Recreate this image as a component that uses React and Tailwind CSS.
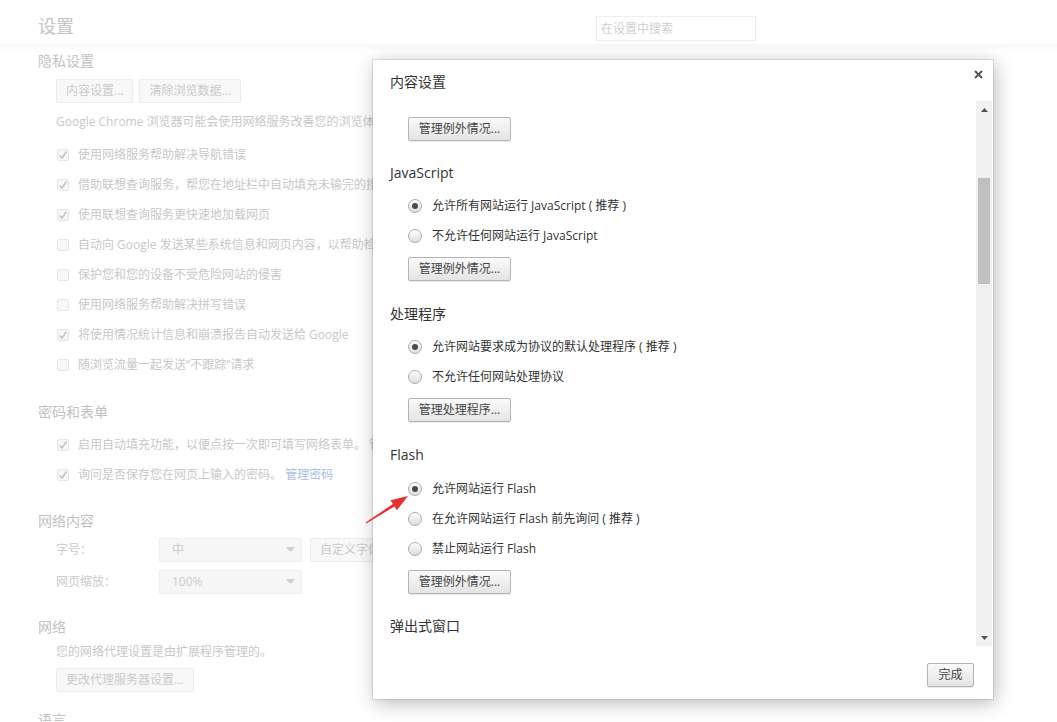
const font = "font-['Open_Sans','Noto_Sans_CJK_SC',sans-serif]";

const FadedCheck = ({ checked, children }) => (
	<div className="flex h-[30px] items-center pl-[57px] whitespace-nowrap">
		<span className="mr-[9px] flex h-[12px] w-[12px] items-center justify-center rounded-[2px] border border-[#e6e6e6] bg-[#f7f7f7]">
			{checked && (
				<svg width="10" height="10" viewBox="0 0 10 10">
					<path d="M1.5 5.5 L4 8 L8.5 1.5" fill="none" stroke="#c4c4c4" strokeWidth="1.6" />
				</svg>
			)}
		</span>
		<span className="text-[12px] text-[#c8c8c8]">{children}</span>
	</div>
);

const FadedButton = ({ children, className = '' }) => (
	<div className={`flex h-[24px] items-center rounded-[2px] border border-[#ececec] bg-[#f8f8f8] px-[9px] text-[12px] text-[#cacaca] whitespace-nowrap ${className}`}>
		{children}
	</div>
);

const FadedSelect = ({ value }) => (
	<div className="flex h-[24px] w-[143px] items-center justify-between border border-[#efefef] bg-[#f6f6f6] pl-[12px] pr-[6px] text-[12px] text-[#cdcdcd]">
		<span>{value}</span>
		<svg width="9" height="6" viewBox="0 0 9 6">
			<path d="M0 0 H9 L4.5 5 Z" fill="#cfcfcf" />
		</svg>
	</div>
);

const Button = ({ children, className = '' }) => (
	<div className={`flex h-[24px] items-center justify-center rounded-[2px] border border-[#b4b4b4] bg-gradient-to-b from-[#fafafa] to-[#e4e4e4] px-[10px] text-[12px] text-[#444] shadow-[0_1px_0_rgba(0,0,0,0.08)] whitespace-nowrap ${className}`}>
		{children}
	</div>
);

const Radio = ({ checked, children }) => (
	<div className="flex h-[30px] items-center pl-[35px] whitespace-nowrap">
		<span className="mr-[10px] flex h-[14px] w-[14px] items-center justify-center rounded-full border border-[#acacac] bg-gradient-to-b from-[#fdfdfd] to-[#dedede]">
			{checked && <span className="h-[6px] w-[6px] rounded-full bg-[#4a4a4a]" />}
		</span>
		<span className="text-[12px] text-[#333]">{children}</span>
	</div>
);

const Heading = ({ children, className = '' }) => (
	<div className={`h-[20px] pl-[17px] text-[14px] leading-[20px] text-[#333] ${className}`}>{children}</div>
);

export default function App() {
	return (
		<div className={`relative h-[722px] w-[1057px] overflow-hidden bg-white ${font}`}>
			{/* faded settings page behind the dialog */}
			<div className="flex h-[44px] items-start px-[38px] pt-[14px]">
				<div className="w-[558px] text-[18px] leading-[25px] text-[#c4c4c4]">设置</div>
				<div className="mt-[2px] flex h-[25px] w-[160px] items-center border border-[#eeeeee] px-[4px] text-[12px] text-[#d0d0d0]">
					在设置中搜索
				</div>
			</div>
			<div className="h-[7px] bg-gradient-to-b from-[#f7f7f7] to-white" />

			<div className="pl-[38px] text-[14px] leading-[20px] text-[#c2c2c2]">隐私设置</div>
			<div className="mt-[8px] flex gap-[6px] pl-[56px]">
				<FadedButton>内容设置...</FadedButton>
				<FadedButton>清除浏览数据...</FadedButton>
			</div>
			<div className="mt-[9px] h-[20px] pl-[56px] text-[12px] leading-[20px] text-[#c8c8c8] whitespace-nowrap">
				Google Chrome 浏览器可能会使用网络服务改善您的浏览体验。您可以视需要停用这些服务。
			</div>
			<div className="mt-[8px]">
				<FadedCheck checked>使用网络服务帮助解决导航错误</FadedCheck>
				<FadedCheck checked>借助联想查询服务，帮您在地址栏中自动填充未输完的搜索字词和网址</FadedCheck>
				<FadedCheck checked>使用联想查询服务更快速地加载网页</FadedCheck>
				<FadedCheck>自动向 Google 发送某些系统信息和网页内容，以帮助检测危险应用和网站</FadedCheck>
				<FadedCheck>保护您和您的设备不受危险网站的侵害</FadedCheck>
				<FadedCheck>使用网络服务帮助解决拼写错误</FadedCheck>
				<FadedCheck checked>将使用情况统计信息和崩溃报告自动发送给 Google</FadedCheck>
				<FadedCheck>随浏览流量一起发送“不跟踪”请求</FadedCheck>
			</div>

			<div className="mt-[22px] pl-[38px] text-[14px] leading-[20px] text-[#c2c2c2]">密码和表单</div>
			<div className="mt-[8px]">
				<FadedCheck checked>启用自动填充功能，以便点按一次即可填写网络表单。 管理自动填充设置</FadedCheck>
				<FadedCheck checked>
					询问是否保存您在网页上输入的密码。 <span className="text-[#a9bde6]">管理密码</span>
				</FadedCheck>
			</div>

			<div className="mt-[21px] pl-[38px] text-[14px] leading-[20px] text-[#c2c2c2]">网络内容</div>
			<div className="mt-[7px] flex items-center pl-[56px]">
				<div className="w-[103px] text-[12px] text-[#cacaca]">字号：</div>
				<FadedSelect value="中" />
				<FadedButton className="ml-[8px]">自定义字体...</FadedButton>
			</div>
			<div className="mt-[8px] flex items-center pl-[56px]">
				<div className="w-[103px] text-[12px] text-[#cacaca]">网页缩放：</div>
				<FadedSelect value="100%" />
			</div>

			<div className="mt-[23px] pl-[38px] text-[14px] leading-[20px] text-[#c2c2c2]">网络</div>
			<div className="mt-[5px] h-[20px] pl-[56px] text-[12px] leading-[20px] text-[#c8c8c8]">
				您的网络代理设置是由扩展程序管理的。
			</div>
			<div className="mt-[6px] pl-[56px]">
				<FadedButton className="w-[138px]">更改代理服务器设置...</FadedButton>
			</div>
			<div className="mt-[18px] pl-[38px] text-[14px] leading-[20px] text-[#c2c2c2]">语言</div>

			{/* content settings dialog */}
			<div className="absolute left-[373px] top-[60px] flex h-[639px] w-[620px] flex-col bg-white shadow-[0_0_0_1px_rgba(0,0,0,0.1),2px_4px_18px_rgba(0,0,0,0.28)]">
				<div className="relative h-[41px] pt-[12px]">
					<Heading>内容设置</Heading>
					<svg className="absolute right-[10px] top-[10px]" width="9" height="9" viewBox="0 0 9 9">
						<path d="M1 1 L8 8 M8 1 L1 8" stroke="#555" strokeWidth="2" />
					</svg>
				</div>
				<div className="flex h-[545px]">
					<div className="flex-1 overflow-hidden">
						<div className="mt-[16px] pl-[35px]">
							<Button className="w-[103px]">管理例外情况...</Button>
						</div>
						<Heading className="mt-[22px]">JavaScript</Heading>
						<div className="mt-[8px]">
							<Radio checked>允许所有网站运行 JavaScript ( 推荐 )</Radio>
							<Radio>不允许任何网站运行 JavaScript</Radio>
						</div>
						<div className="mt-[6px] pl-[35px]">
							<Button className="w-[103px]">管理例外情况...</Button>
						</div>
						<Heading className="mt-[23px]">处理程序</Heading>
						<div className="mt-[8px]">
							<Radio checked>允许网站要求成为协议的默认处理程序 ( 推荐 )</Radio>
							<Radio>不允许任何网站处理协议</Radio>
						</div>
						<div className="mt-[6px] pl-[35px]">
							<Button className="w-[103px]">管理处理程序...</Button>
						</div>
						<Heading className="mt-[23px]">Flash</Heading>
						<div className="mt-[9px]">
							<Radio checked>允许网站运行 Flash</Radio>
							<Radio>在允许网站运行 Flash 前先询问 ( 推荐 )</Radio>
							<Radio>禁止网站运行 Flash</Radio>
						</div>
						<div className="mt-[6px] pl-[35px]">
							<Button className="w-[103px]">管理例外情况...</Button>
						</div>
						<Heading className="mt-[22px]">弹出式窗口</Heading>
					</div>
					{/* scrollbar */}
					<div className="mr-[1px] flex w-[16px] flex-col bg-[#f1f1f1]">
						<div className="flex h-[17px] items-center justify-center">
							<svg width="7" height="4" viewBox="0 0 7 4">
								<path d="M0 4 L3.5 0 L7 4 Z" fill="#505050" />
							</svg>
						</div>
						<div className="h-[60px]" />
						<div className="mx-[2px] h-[106px] bg-[#c1c1c1]" />
						<div className="flex-1" />
						<div className="flex h-[17px] items-center justify-center">
							<svg width="7" height="4" viewBox="0 0 7 4">
								<path d="M0 0 L7 0 L3.5 4 Z" fill="#505050" />
							</svg>
						</div>
					</div>
				</div>
				<div className="flex flex-1 items-start justify-end pr-[19px] pt-[17px]">
					<Button className="w-[47px] px-0">完成</Button>
				</div>
			</div>

			{/* red pointer arrow */}
			<svg className="absolute left-[360px] top-[488px]" width="52" height="40" viewBox="0 0 52 40">
				<polygon
					points="5.7,34.6 32.9,15.9 30.5,12.2 48,8 36.9,22.3 34.5,18.5 6.3,35.4"
					fill="#e8302e"
				/>
			</svg>
		</div>
	);
}
